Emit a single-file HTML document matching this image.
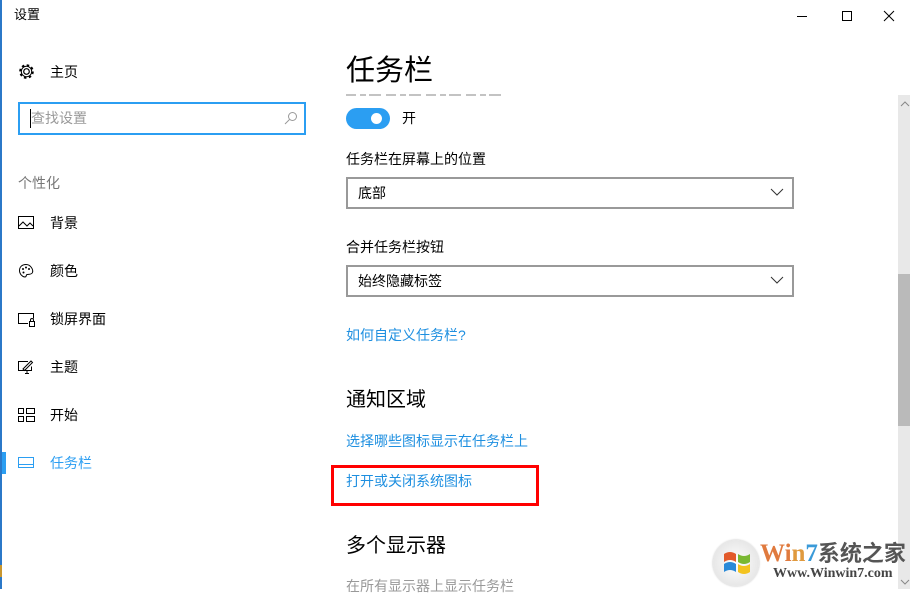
<!DOCTYPE html>
<html><head><meta charset="utf-8"><style>
*{margin:0;padding:0;box-sizing:border-box}
body{width:910px;height:589px;overflow:hidden;background:#fff;position:relative;font-family:"Liberation Sans","Noto Sans CJK SC",sans-serif;color:#000}
.a{position:absolute;white-space:nowrap}
.t{font-size:14px;line-height:18px}
.blue{color:#1e8fe0}
.dd{position:absolute;left:346px;width:448px;height:32px;border:2px solid #999;font-size:14px;line-height:28px;padding-left:10px}
.dd svg{position:absolute;right:8px;top:9px}
</style></head><body>
<div class="a" style="left:0;top:0;width:2px;height:589px;background:#2b78c8"></div>
<div class="a" style="left:0;top:565px;width:2px;height:12px;background:#c8962e"></div>
<div class="a t" style="left:14px;top:6px;font-size:13px">设置</div>
<svg class="a" style="left:792px;top:9px" width="110" height="14"><path d="M5 7.5h10" stroke="#000"/><rect x="50.5" y="2.5" width="9" height="9" fill="none" stroke="#000"/><path d="M92 2l10 10M102 2l-10 10" stroke="#000"/></svg>

<svg class="a" style="left:17px;top:62px" width="19" height="19" viewBox="0 0 19 19"><circle cx="9.5" cy="9.5" r="2.8" fill="none" stroke="#000" stroke-width="1.2"/><circle cx="9.5" cy="9.5" r="6.3" fill="none" stroke="#000" stroke-width="2" stroke-dasharray="2.5 2.45"/><circle cx="9.5" cy="9.5" r="5.2" fill="none" stroke="#000" stroke-width="1"/></svg>
<div class="a t" style="left:50px;top:63px">主页</div>
<div class="a" style="left:18px;top:102px;width:288px;height:33px;border:2px solid #2b9ef2"></div>
<div class="a" style="left:30px;top:109px;width:1px;height:19px;background:#000"></div>
<div class="a t" style="left:31px;top:109px;color:#999">查找设置</div>
<svg class="a" style="left:284px;top:111px" width="14" height="14"><circle cx="8.5" cy="5.5" r="4" fill="none" stroke="#999"/><path d="M5.5 8.5L1 13" stroke="#999"/></svg>
<div class="a t" style="left:18px;top:174px;color:#777">个性化</div>

<svg class="a" style="left:18px;top:216px" width="16" height="14"><rect x=".5" y=".5" width="15" height="12" fill="none" stroke="#000"/><path d="M1 10l4-4 4 4 3-3 3 3" fill="none" stroke="#000"/></svg>
<div class="a t" style="left:50px;top:214px">背景</div>
<svg class="a" style="left:18px;top:263px" width="16" height="16"><path d="M8 1.5C4 1.5 1.5 4 1.5 7.5s3 6.5 5.5 6.5c1.5 0 1-2 2-2.5s4.5.5 5.5-2c1-3-2-8-6.5-8z" fill="none" stroke="#000"/><circle cx="5" cy="6" r="1"/><circle cx="8" cy="4.5" r="1"/><circle cx="11" cy="6" r="1"/><circle cx="5.5" cy="9.5" r="1"/></svg>
<div class="a t" style="left:50px;top:262px">颜色</div>
<svg class="a" style="left:18px;top:312px" width="17" height="15"><path d="M10 11.5H.5v-10h15v5" fill="none" stroke="#000"/><rect x="11.5" y="9.5" width="5" height="5" fill="none" stroke="#000"/><path d="M12.5 9.5v-1.5a1.5 1.5 0 013 0v1.5" fill="none" stroke="#000"/></svg>
<div class="a t" style="left:50px;top:310px">锁屏界面</div>
<svg class="a" style="left:18px;top:359px" width="17" height="16"><path d="M10 2.5H.5v9h13v-4" fill="none" stroke="#000"/><path d="M7 14.5h4M9 11.5v3M5 10l8-8 1.5 1.5-8 8z" fill="none" stroke="#000"/></svg>
<div class="a t" style="left:50px;top:358px">主题</div>
<svg class="a" style="left:18px;top:408px" width="17" height="14"><rect x=".5" y=".5" width="5" height="5" fill="none" stroke="#000"/><rect x="8.5" y=".5" width="8" height="5" fill="none" stroke="#000"/><rect x=".5" y="8.5" width="5" height="5" fill="none" stroke="#000"/><rect x="8.5" y="8.5" width="8" height="5" fill="none" stroke="#000"/></svg>
<div class="a t" style="left:50px;top:406px">开始</div>
<div class="a" style="left:2px;top:452px;width:4px;height:22px;background:#2b9ef2"></div>
<svg class="a" style="left:18px;top:457px" width="16" height="12"><rect x=".5" y=".5" width="15" height="10" fill="none" stroke="#2b9ef2"/><path d="M1 7.5h14" stroke="#2b9ef2"/></svg>
<div class="a t blue" style="left:50px;top:454px;color:#2b9ef2">任务栏</div>

<div class="a" style="left:346px;top:52px;font-size:29px;line-height:38px">任务栏</div>
<svg class="a" style="left:346px;top:93px" width="165" height="4"><path d="M0 2h160" stroke="#888" stroke-width="2" stroke-dasharray="10 4 6 3 12 5" opacity=".5"/></svg>
<div class="a" style="left:346px;top:108px;width:44px;height:21px;border-radius:11px;background:#2b9ef2"></div>
<div class="a" style="left:371px;top:113px;width:11px;height:11px;border-radius:50%;background:#fff"></div>
<div class="a t" style="left:402px;top:109px">开</div>
<div class="a t" style="left:346px;top:150px">任务栏在屏幕上的位置</div>
<div class="dd" style="top:177px">底部<svg width="14" height="9"><path d="M1 1l6 6 6-6" fill="none" stroke="#333"/></svg></div>
<div class="a t" style="left:346px;top:238px">合并任务栏按钮</div>
<div class="dd" style="top:265px">始终隐藏标签<svg width="14" height="9"><path d="M1 1l6 6 6-6" fill="none" stroke="#333"/></svg></div>
<div class="a t blue" style="left:346px;top:326px">如何自定义任务栏?</div>
<div class="a" style="left:346px;top:387px;font-size:20px;line-height:26px">通知区域</div>
<div class="a t blue" style="left:346px;top:432px">选择哪些图标显示在任务栏上</div>
<div class="a" style="left:331px;top:465px;width:208px;height:41px;border:3px solid #f00"></div>
<div class="a t blue" style="left:346px;top:472px">打开或关闭系统图标</div>
<div class="a" style="left:346px;top:533px;font-size:20px;line-height:26px">多个显示器</div>
<div class="a t" style="left:346px;top:577px;color:#999">在所有显示器上显示任务栏</div>

<div class="a" style="left:898px;top:95px;width:12px;height:494px;background:#e8e8e8"></div>
<div class="a" style="left:898px;top:274px;width:12px;height:152px;background:#bababa"></div>
<svg class="a" style="left:900px;top:100px" width="10" height="8"><path d="M1 6l4-4 4 4" fill="none" stroke="#888"/></svg>
<svg class="a" style="left:900px;top:578px" width="10" height="8"><path d="M1 2l4 4 4-4" fill="none" stroke="#888"/></svg>

<div class="a" style="left:713px;top:540px;width:46px;height:46px;border-radius:50%;background:radial-gradient(#fff,#ddd);box-shadow:0 0 2px #bbb"></div>
<svg class="a" style="left:722px;top:548px" width="30" height="30"><path d="M2 6q6-4 12 0v8q-6-4-12 0z" fill="#e25a2b"/><path d="M16 6q6 4 12 0v8q-6 4-12 0z" fill="#7ab832"/><path d="M2 16q6-4 12 0v8q-6-4-12 0z" fill="#2a8ad8"/><path d="M16 16q6 4 12 0v8q-6 4-12 0z" fill="#f3c31f"/></svg>
<div class="a" style="left:760px;top:538px;font-family:'Liberation Serif',serif;font-weight:bold;font-size:25px;line-height:28px"><span style="color:#e07a3e">W</span><span style="color:#e07a3e">i</span><span style="color:#e09a3e">n</span><span style="color:#3a9ad8">7</span><span style="color:#555;font-family:'Noto Sans CJK SC',sans-serif;font-size:22px">系统之家</span></div>
<div class="a" style="left:773px;top:566px;font-family:'Liberation Serif',serif;font-weight:bold;font-size:14px;color:#444">Www.Winwin7.com</div>
</body></html>
